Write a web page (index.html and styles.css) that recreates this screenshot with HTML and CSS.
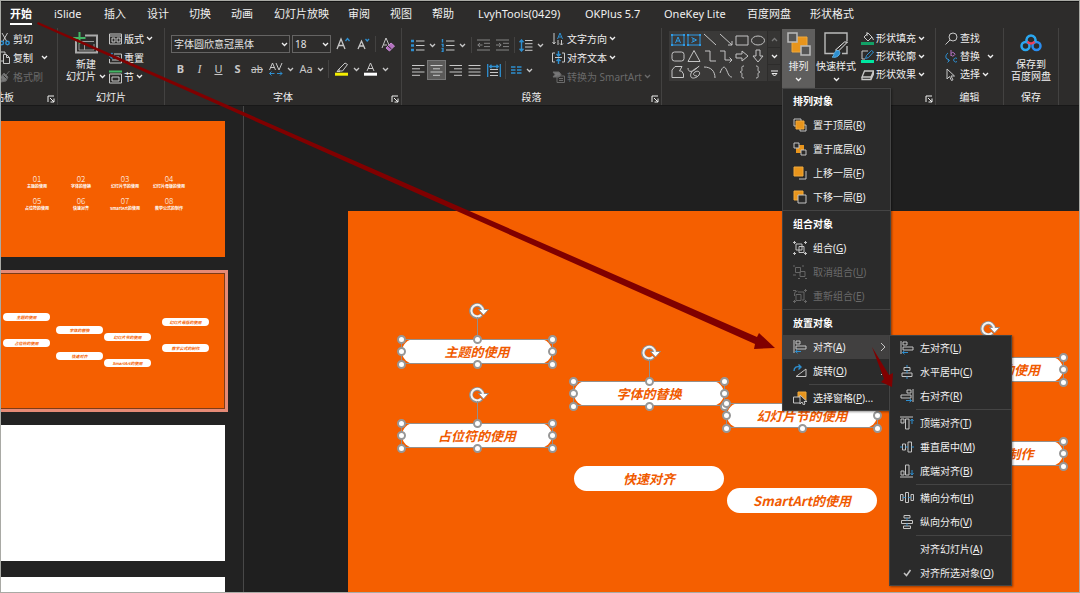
FILE: index.html
```html
<!DOCTYPE html>
<html lang="zh-CN">
<head>
<meta charset="utf-8">
<title>演示文稿</title>
<link rel="stylesheet" href="styles.css">
</head>
<body>
<svg class="defs" aria-hidden="true">
  <symbol id="caret" viewBox="0 0 7 5"><path d="M1 1l2.5 2.5L6 1"/></symbol>
  <symbol id="launch" viewBox="0 0 8 8"><path d="M1 7V1h6M3 3l4 4M7 3.5V7H3.5"/></symbol>
  <symbol id="rot" viewBox="0 0 20 18">
    <path d="M12.500 13A6 6 0 1 1 14 8" stroke="#8f8f8f" stroke-width="4"/>
    <path d="M9.500 7.500h10l-5 5.500z" fill="#fff" stroke="#8f8f8f" stroke-width="1"/>
    <path d="M12.200 12.800A5.800 5.800 0 1 1 14 8.500" stroke="#f4f4f4" stroke-width="2"/>
  </symbol>
</svg>
<div class="app">
  <header class="ribbon">
    <nav class="tabs">
      <button class="tab active">开始</button><button class="tab">iSlide</button><button class="tab">插入</button><button class="tab">设计</button><button class="tab">切换</button><button class="tab">动画</button><button class="tab">幻灯片放映</button><button class="tab">审阅</button><button class="tab">视图</button><button class="tab">帮助</button><button class="tab">LvyhTools(0429)</button><button class="tab">OKPlus 5.7</button><button class="tab">OneKey Lite</button><button class="tab">百度网盘</button><button class="tab">形状格式</button>
    </nav>
    <div class="groups">
      <section class="group clipboard">
        <div class="body stack">
          <button class="cmd"><svg width="10" height="14" viewBox="0 0 10 14"><path d="M2 1l4.500 8M7.500 1L3 9"/><g stroke="#2e8fd0" stroke-width="1.500"><circle cx="1.800" cy="11" r="1.700"/><circle cx="7.500" cy="11" r="1.700"/></g></svg>剪切</button>
          <button class="cmd"><svg width="10" height="14" viewBox="0 0 10 14"><path d="M3.500 3.500h3l3 3v6h-6zM6.500 3.500v3h3M3 10H0V1h5v2"/></svg>复制<svg class="caret push"><use href="#caret"/></svg></button>
          <button class="cmd off"><svg width="10" height="14" viewBox="0 0 10 14"><path d="M9.500 1L6 5M4 3l4 4-2 4-5 1 1-3-2-1z" fill="#777"/><path d="M3.500 5.500l3 3" stroke="#2d2c2b"/></svg>格式刷</button>
        </div>
        <div class="foot"><span>剪贴板</span><button class="launch" aria-label="剪贴板选项"><svg><use href="#launch"/></svg></button></div>
      </section>
      <section class="group slides">
        <div class="body row">
          <button class="big newslide"><svg width="26" height="24" viewBox="0 0 26 24"><path d="M12 4.500h12v17H3V10" stroke="#aaa" stroke-width="2"/><path d="M6 10.500h15M11.500 13v6M6 13v6h15v-6" stroke="#999"/><path d="M6.500 1v12M0 7h12.500" stroke="#43b765" stroke-width="2"/></svg><span>新建</span><span>幻灯片 <svg class="caret"><use href="#caret"/></svg></span></button>
          <div class="stack">
            <button class="cmd"><svg width="13" height="12" viewBox="0 0 13 12"><path d="M.5 1h12v10H.5zM.5 3h12M3 5h3v4H3zM8 5h3v4H8z"/></svg>版式<svg class="caret"><use href="#caret"/></svg></button>
            <button class="cmd"><svg width="13" height="12" viewBox="0 0 13 12"><path d="M5 2h7.500v9h-12V7M3 8h7V5H6"/><path d="M1 4h4a3 3 0 0 1 2 3M3.500 1L.8 4l2.700 2.500" stroke="#2e8fd0" stroke-width="1.500"/></svg>重置</button>
            <button class="cmd"><svg width="13" height="14" viewBox="0 0 13 14"><path d="M0 1.500h13" stroke="#43b765" stroke-width="2"/><path d="M.5 4h12v9H.5zM3 7h7v4H3z"/></svg>节<svg class="caret"><use href="#caret"/></svg></button>
          </div>
        </div>
        <div class="foot"><span>幻灯片</span></div>
      </section>
      <section class="group font">
        <div class="body rows">
          <div class="tools font-top">
            <label class="combo"><select aria-label="字体"><option>字体圆欣意冠黑体</option></select><svg class="caret"><use href="#caret"/></svg></label>
            <label class="combo"><select aria-label="字号"><option>18</option></select><svg class="caret"><use href="#caret"/></svg></label>
            <button class="ib" aria-label="增大字号"><svg width="14" height="14" viewBox="0 0 14 14"><path d="M1 12L5 2l4 10M2.500 8.500h5" stroke-width="1.300"/><path d="M9.500 4l2-2.500 2 2.500" stroke="#2e8fd0" stroke-width="1.300"/></svg></button>
            <button class="ib" aria-label="减小字号"><svg width="14" height="14" viewBox="0 0 14 14"><path d="M2 12l3.500-8L9 12M3.500 9h4" stroke-width="1.300"/><path d="M9.500 2l1.700 2L13 2" stroke="#2e8fd0" stroke-width="1.300"/></svg></button>
            <i class="sep"></i>
            <button class="ib" aria-label="清除格式"><svg width="15" height="15" viewBox="0 0 15 15"><path d="M1 11L5 1l3 7M2.500 8H6"/><path d="M5 11l5-5 3.500 3-5 5z" fill="#b470c0" stroke="#c58ad0"/><path d="M7 9l3.500 3" stroke="#2d2c2b"/></svg></button>
          </div>
          <div class="tools font-bottom">
            <button class="ib"><b>B</b></button>
            <button class="ib serif"><em>I</em></button>
            <button class="ib"><u>U</u></button>
            <button class="ib"><b>S</b></button>
            <button class="ib small"><s>ab</s></button>
            <button class="ib" aria-label="字符间距"><svg width="14" height="14" viewBox="0 0 14 14"><path d="M.5 8l3-7 3 7M1.500 5.500h4M7 1l3 7 3-7"/><path d="M.5 11.500h5M2.500 9.500l-2 2 2 2M8 11.500h5M11 9.500l2 2-2 2" stroke="#2e8fd0"/></svg><svg class="caret"><use href="#caret"/></svg></button>
            <button class="ib">Aa<svg class="caret"><use href="#caret"/></svg></button>
            <i class="sep"></i>
            <button class="ib" aria-label="突出显示"><svg width="14" height="14" viewBox="0 0 14 14"><path d="M4 7l6-6 2.500 1.500-5 6.500H4zM4 7L2 9.500h3"/><path d="M0 12.200h13" stroke="#f4ee00" stroke-width="3"/></svg><svg class="caret"><use href="#caret"/></svg></button>
            <button class="ib" aria-label="字体颜色"><svg width="14" height="14" viewBox="0 0 14 14"><path d="M3 9l3.500-8L10 9M4 6.500h5"/><path d="M0 12.200h13" stroke="#fff" stroke-width="3"/></svg><svg class="caret"><use href="#caret"/></svg></button>
          </div>
        </div>
        <div class="foot"><span>字体</span><button class="launch" aria-label="字体选项"><svg><use href="#launch"/></svg></button></div>
      </section>
      <section class="group para">
        <div class="body row">
          <div class="rows">
            <div class="tools para-top">
              <button class="ib" aria-label="项目符号"><svg width="14" height="13" viewBox="0 0 14 13"><path d="M5 2h8.500M5 6.500h8.500M5 11h8.500"/><path d="M0 2h3M0 6.500h3M0 11h3" stroke="#2e8fd0" stroke-width="2.500"/></svg><svg class="caret"><use href="#caret"/></svg></button>
              <button class="ib" aria-label="编号"><svg width="14" height="13" viewBox="0 0 14 13"><path d="M5 2h8.500M5 6.500h8.500M5 11h8.500"/><path d="M1.500 0v3.500M.5 5.500h1.500v2.500M.5 9.500h1.500v3H.5" stroke="#2e8fd0" stroke-width="1.400"/></svg><svg class="caret"><use href="#caret"/></svg></button>
              <i class="sep"></i>
              <button class="ib dim" aria-label="减少缩进"><svg width="13" height="12" viewBox="0 0 13 12"><path d="M0 1h13M7 4.300h6M7 7.600h6M0 11h13M5.500 6H.8M3 4L.8 6 3 8"/></svg></button>
              <button class="ib dim" aria-label="增加缩进"><svg width="13" height="12" viewBox="0 0 13 12"><path d="M0 1h13M7 4.300h6M7 7.600h6M0 11h13M0 6h5M3 4l2.200 2L3 8"/></svg></button>
              <i class="sep"></i>
              <button class="ib" aria-label="行距"><svg width="14" height="13" viewBox="0 0 14 13"><path d="M6 1.500h7.500M6 4.700h7.500M6 8h7.500M6 11.300h7.500"/><path d="M2.500 1v11M.5 3.200l2-2.200 2 2.200M.5 9.800l2 2.200 2-2.200" stroke="#2e8fd0" stroke-width="1.400"/></svg><svg class="caret"><use href="#caret"/></svg></button>
            </div>
            <div class="tools para-bottom">
              <button class="ib" aria-label="左对齐"><svg width="13" height="13" viewBox="0 0 13 13"><path d="M0 1.500h12.500M0 4.800h8M0 8h12.500M0 11.300h8"/></svg></button>
              <button class="ib on" aria-label="居中"><svg width="13" height="13" viewBox="0 0 13 13"><path d="M.5 1.500h12M3 4.800h7M.5 8h12M3 11.300h7"/></svg></button>
              <button class="ib" aria-label="右对齐"><svg width="13" height="13" viewBox="0 0 13 13"><path d="M.5 1.500H13M5 4.800h8M.5 8H13M5 11.300h8"/></svg></button>
              <button class="ib" aria-label="两端对齐"><svg width="13" height="13" viewBox="0 0 13 13"><path d="M.5 1.500h12M.5 4.800h12M.5 8h12M.5 11.300h12"/></svg></button>
              <button class="ib" aria-label="分散对齐"><svg width="14" height="13" viewBox="0 0 14 13"><path d="M3 5.500h8M3 8.500h8M3 11.500h8"/><path d="M.7 0v13M13.300 0v13M2.500 2.500h9M4.500.8L2.700 2.500l1.800 1.700M9.500.8l1.800 1.700-1.800 1.700" stroke="#2e8fd0" stroke-width="1.300"/></svg></button>
              <i class="sep"></i>
              <button class="ib" aria-label="分栏"><svg width="11" height="8" viewBox="0 0 11 8"><path d="M0 1h4.500M0 4h4.500M0 7h4.500M6 1h4.500M6 4h4.500M6 7h4.500" stroke="#2e8fd0" stroke-width="1.400"/></svg><svg class="caret"><use href="#caret"/></svg></button>
            </div>
          </div>
          <div class="stack">
            <button class="cmd"><svg width="13" height="14" viewBox="0 0 13 14"><path d="M2 1v11M.5 10L2 12l1.500-2M6 8v5M9.500 8v5M8 11.500L9.500 13l1.500-1.500"/><path d="M5.500 7L8 1l2.500 6M6.500 5h3" stroke="#2e8fd0"/></svg>文字方向<svg class="caret"><use href="#caret"/></svg></button>
            <button class="cmd"><svg width="13" height="14" viewBox="0 0 13 14"><path d="M3 2H.5v9H3M10 2h2.500v9H10M3 6.500h7"/><path d="M6.500 0v5M4.500 3l2 2 2-2M6.500 13V8M4.500 10l2-2 2 2" stroke="#2e8fd0" stroke-width="1.400"/></svg>对齐文本<svg class="caret"><use href="#caret"/></svg></button>
            <button class="cmd off"><svg width="13" height="14" viewBox="0 0 13 14"><path d="M1 2h6l2 2.500L7 7H1l2-2.500z" fill="#777"/><path d="M5 6h7.500v6.500H5zM7 8.500h4M7 10.500h4"/></svg>转换为 SmartArt<svg class="caret"><use href="#caret"/></svg></button>
          </div>
        </div>
        <div class="foot"><span>段落</span><button class="launch" aria-label="段落选项"><svg><use href="#launch"/></svg></button></div>
      </section>
      <section class="group draw">
        <div class="body row">
          <div class="gallery">
            <button aria-label="文本框"><svg><path d="M2 3h12v10H2zM5.500 11L8 5l2.500 6M6.500 9h3" stroke="#2e9be6"/><path d="M1 2h2v2H1zM13 2h2v2h-2zM1 12h2v2H1zM13 12h2v2h-2z" fill="#2e9be6" stroke="none"/></svg></button>
            <button aria-label="竖排文本框"><svg><path d="M2 3h12v10H2zM5.500 5.500l5 2.500-5 2.500M7 6.500v3" stroke="#2e9be6"/><path d="M1 2h2v2H1zM13 2h2v2h-2zM1 12h2v2H1zM13 12h2v2h-2z" fill="#2e9be6" stroke="none"/></svg></button>
            <button aria-label="直线"><svg><path d="M2 2l12 11"/></svg></button>
            <button aria-label="箭头"><svg><path d="M2 2l12 11M14 9v4h-4"/></svg></button>
            <button aria-label="矩形"><svg><path d="M2 4h12v9H2z"/></svg></button>
            <button aria-label="椭圆"><svg><ellipse cx="8" cy="8.500" rx="6.500" ry="4.500"/></svg></button>
            <button aria-label="圆角矩形"><svg><rect x="2" y="4" width="12" height="9" rx="2.500"/></svg></button>
            <button aria-label="三角形"><svg><path d="M8 2.500L14 13.500H2z"/></svg></button>
            <button aria-label="肘形连接符"><svg><path d="M3 3h5v10h6"/></svg></button>
            <button aria-label="肘形箭头"><svg><path d="M2 3h5v9h7M11.500 9.500L14 12l-2.500 2.500"/></svg></button>
            <button aria-label="右箭头"><svg><path d="M2 6h6V3l6 5-6 5v-3H2z"/></svg></button>
            <button aria-label="下箭头"><svg><path d="M6 2h4v6h3l-5 6-5-6h3z"/></svg></button>
            <button aria-label="任意多边形"><svg><path d="M2 13.500V6l3-3.500h7L9.500 7h2l2 3v3.500z"/></svg></button>
            <button aria-label="自由曲线"><svg><path d="M2 4c0 5 5 4 9 0s2-1-2 1-5 6-4 8 6 1 8-2-1-5-4-3-1 4 2 4"/></svg></button>
            <button aria-label="弧形"><svg><path d="M2 3c7 0 11 4 11 11"/></svg></button>
            <button aria-label="曲线"><svg><path d="M2 9c3-8 5-7 7-2s3 6 5 6"/></svg></button>
            <button aria-label="左大括号"><svg><path d="M10 2c-3 0-2 2-2 4 0 1-1 2-2 2 1 0 2 1 2 2 0 2-1 4 2 4"/></svg></button>
            <button aria-label="右大括号"><svg><path d="M6 2c3 0 2 2 2 4 0 1 1 2 2 2-1 0-2 1-2 2 0 2 1 4-2 4"/></svg></button>
          </div>
          <div class="scroller">
            <button class="dim" aria-label="上一行"><svg class="caret flip"><use href="#caret"/></svg></button>
            <button aria-label="下一行"><svg class="caret"><use href="#caret"/></svg></button>
            <button aria-label="更多"><svg width="7" height="7" viewBox="0 0 7 7"><path d="M0 1h7M1 3.500L3.500 6 6 3.500z"/></svg></button>
          </div>
          <div class="arrange">
            <button class="big pressed"><svg width="24" height="24" viewBox="0 0 24 24"><path d="M5 5h15v15H5z" fill="#e8951c" stroke="#f0a93c"/><path d="M1 1h9v9H1zM14 14h9v9h-9z" fill="#555" stroke="#bbb" stroke-width="1.500"/></svg><span>排列</span><svg class="caret"><use href="#caret"/></svg></button>
            <div class="menu">
              <h3>排列对象</h3>
              <button class="item"><svg><path d="M1 1h7v7H1zM7 7h6v6H7z"/><path d="M3 3h8v8H3z" fill="#e8951c" stroke="#f0a93c"/></svg><span>置于顶层(<u>R</u>)</span></button>
              <button class="item"><svg><path d="M3 3h8v8H3z" fill="#e8951c" stroke="none"/><path d="M1 1h5v5H1zM8 8h5v5H8z" fill="#2b2b2b"/></svg><span>置于底层(<u>K</u>)</span></button>
              <button class="item"><svg><path d="M6 13h7V5"/><path d="M1 1h9v9H1z" fill="#e8951c" stroke="#f0a93c"/></svg><span>上移一层(<u>F</u>)</span></button>
              <button class="item"><svg><path d="M1 1h9v9H1z" fill="#e8951c" stroke="#f0a93c"/><path d="M5 5h8v8H5z" fill="#2b2b2b"/></svg><span>下移一层(<u>B</u>)</span></button>
              <hr>
              <h3>组合对象</h3>
              <button class="item"><svg><path d="M3 3h6v6H3zM6 5.500h5v6H6zM0 1.500h3M1.500 0v3M11 1.500h3M12.500 0v3M0 12.500h3M1.500 11v3M11 12.500h3M12.500 11v3"/></svg><span>组合(<u>G</u>)</span></button>
              <button class="item off"><svg><path d="M2.500 2.500h5v5h-5zM7 6.500h5v5H7zM0 1h2M9 1h2M0 10h3M5 13.500h2M12 13.500h2"/></svg><span>取消组合(<u>U</u>)</span></button>
              <button class="item off"><svg><path d="M3 5.500h5v6H3zM5 3h6v8H9M0 1.500h3M11 1.500h3M12.500 0v3M0 12.500h3M1.500 11v3M11 12.500h3M12.500 11v3M1.500 7V5a3 3 0 0 1 3-3"/></svg><span>重新组合(<u>E</u>)</span></button>
              <hr>
              <h3>放置对象</h3>
              <div class="sub">
                <button class="item hover"><svg><path d="M1 0v13M3 1h4v3H3zM3 6h10v3H3z"/><path d="M2.500 11.500H8M4.500 9.800l-2 1.700 2 1.700" stroke="#2e8fd0"/></svg><span>对齐(<u>A</u>)</span><svg class="more"><path d="M1 1l4 4-4 4"/></svg></button>
                <div class="menu submenu">
                  <button class="item"><svg><path d="M1 0v13M3 1h4v3H3zM3 6h10v3H3z"/><path d="M2.500 11.500H8M4.500 9.800l-2 1.700 2 1.700" stroke="#2e8fd0"/></svg><span>左对齐(<u>L</u>)</span></button>
                  <button class="item"><svg><path d="M4 2.500h6v3H4zM2 8h10v3.500H2z"/><path d="M7 0v2.500M7 5.500V8M7 11.500V14" stroke="#2e8fd0"/></svg><span>水平居中(<u>C</u>)</span></button>
                  <button class="item"><svg><path d="M13 0v13M7 1h4v3H7zM1 6h10v3H1z"/><path d="M6 11.500h5.500M9.500 9.800l2 1.700-2 1.700" stroke="#2e8fd0"/></svg><span>右对齐(<u>R</u>)</span></button>
                  <hr class="inset">
                  <button class="item"><svg><path d="M0 1h13M1 3h3v4H1zM5.500 3H9v10H5.500z"/><path d="M12 8V3M10.500 5L12 3l1.500 2" stroke="#2e8fd0"/></svg><span>顶端对齐(<u>T</u>)</span></button>
                  <button class="item"><svg><path d="M2.500 4h3v6h-3zM8 2h3.500v10H8z"/><path d="M0 7h2.500M5.500 7H8M11.500 7H14" stroke="#2e8fd0"/></svg><span>垂直居中(<u>M</u>)</span></button>
                  <button class="item"><svg><path d="M0 13h13M1 7h3v4H1zM5.500 1H9v10H5.500z"/><path d="M12 6v5M10.500 9l1.500 2 1.500-2" stroke="#2e8fd0"/></svg><span>底端对齐(<u>B</u>)</span></button>
                  <hr class="inset">
                  <button class="item"><svg><path d="M.5 3.500H3v6H.500zM5.500 1.500h3v10h-3zM11 3.500h2.500v6H11z"/><path d="M3 6.500h2.500M8.500 6.500H11" stroke="#2e8fd0"/></svg><span>横向分布(<u>H</u>)</span></button>
                  <button class="item"><svg><path d="M4 .5h6V3H4zM1.500 5.500h11v3h-11zM3.500 11h7v2.500h-7z"/><path d="M7 3v2.500M7 8.500V11" stroke="#2e8fd0"/></svg><span>纵向分布(<u>V</u>)</span></button>
                  <hr class="inset">
                  <button class="item"><svg></svg><span>对齐幻灯片(<u>A</u>)</span></button>
                  <button class="item"><svg><path d="M4 7l2.500 2.500L10.500 4" stroke-width="1.500"/></svg><span>对齐所选对象(<u>O</u>)</span></button>
                </div>
              </div>
              <button class="item"><svg><path d="M3 12.500h10V5z"/><path d="M1 7c0-4 3-5 6-4M5.500.5L8 3 5.500 5.500" stroke="#2e8fd0" stroke-width="1.400"/></svg><span>旋转(<u>O</u>)</span><svg class="more"><path d="M1 1l4 4-4 4"/></svg></button>
              <hr class="inset">
              <button class="item"><svg><path d="M5 1h8v8H5z" fill="#e8951c" stroke="#f0a93c"/><path d="M.5 6h7v6h-7z" fill="#2b2b2b"/><path d="M7 4v9l2-2 1.500 3 1.500-1-1-2.500h3z" fill="#2b2b2b"/></svg><span>选择窗格(<u>P</u>)...</span></button>
            </div>
          </div>
          <button class="big styles"><svg width="24" height="26" viewBox="0 0 24 26"><path d="M10 21.500H1V1h22v8M23 14v7.500h-5" stroke="#bbb" stroke-width="1.400"/><path d="M23.500 10l-9 9-3-1 9-8z" fill="#2d2c2b"/><path d="M8 25c2 0 2-6 5-6.500s4 3 1 5.500c-2 1.500-4 1.500-6 1z" fill="#2e8fd0" stroke="#5cb0e6"/></svg><span>快速样式</span><svg class="caret"><use href="#caret"/></svg></button>
          <div class="stack tight">
            <button class="cmd"><svg width="13" height="13" viewBox="0 0 13 13"><path d="M3 5l4-4 4 4-4 4zM6 0v4M11 5l1.500 3"/><path d="M0 11.500h13" stroke="#12a066" stroke-width="3"/></svg>形状填充<svg class="caret"><use href="#caret"/></svg></button>
            <button class="cmd"><svg width="13" height="13" viewBox="0 0 13 13"><path d="M7 1H1v8h3"/><path d="M4.500 8.500l1-3L10.500.500l2 1.500-5 5.500z" stroke="#2e8fd0"/><path d="M0 11.500h13" stroke="#00e6a0" stroke-width="3"/></svg>形状轮廓<svg class="caret"><use href="#caret"/></svg></button>
            <button class="cmd"><svg width="13" height="13" viewBox="0 0 13 13"><path d="M3.500 3h9l-2.500 6H1zM1 9v2.500h9l2.500-5.500V3M10 9v2.500" stroke-width="1.300"/></svg>形状效果<svg class="caret"><use href="#caret"/></svg></button>
          </div>
        </div>
        <div class="foot"><span></span><button class="launch" aria-label="形状选项"><svg><use href="#launch"/></svg></button></div>
      </section>
      <section class="group edit">
        <div class="body stack tight">
          <button class="cmd"><svg width="13" height="13" viewBox="0 0 13 13"><circle cx="8" cy="5" r="4"/><path d="M5 8L.5 12.500"/></svg>查找</button>
          <button class="cmd"><svg width="13" height="13" viewBox="0 0 13 13"><path d="M6 0v6M6 3.500a2 1.700 0 1 1 0 1.500" stroke="#b470c0"/><path d="M3 3C0 5 0 9 4 10.500M2.500 8.500l2 2-2 2M12 8.500a2 2 0 1 0 0 3" stroke="#2e8fd0"/></svg>替换<svg class="caret push"><use href="#caret"/></svg></button>
          <button class="cmd"><svg width="13" height="13" viewBox="0 0 13 13"><path d="M2 1v10l2.500-2.500L6.500 12.500l1.500-.7-2-3.800h3.500z"/></svg>选择<svg class="caret"><use href="#caret"/></svg></button>
        </div>
        <div class="foot"><span>编辑</span></div>
      </section>
      <section class="group save">
        <div class="body">
          <button class="big netdisk"><svg width="22" height="20" viewBox="0 0 22 20"><g stroke-width="2.500"><circle cx="5.500" cy="13" r="4" stroke="#2aa7f0"/><circle cx="16.500" cy="13" r="4" stroke="#2a8df0"/><path d="M7 9a4.500 4.500 0 1 1 8 0" stroke="#2aa7f0"/><path d="M7.500 8.500a4 4 0 0 0 7 0" stroke="#f0405a"/></g></svg><span>保存到</span><span>百度网盘</span></button>
        </div>
        <div class="foot"><span>保存</span></div>
      </section>
    </div>
  </header>
  <main class="work">
    <aside class="thumbs">
      <div class="thumb toc">
        <div><b>01</b><span>主题的使用</span></div><div><b>02</b><span>字体的替换</span></div><div><b>03</b><span>幻灯片节的使用</span></div><div><b>04</b><span>幻灯片母版的使用</span></div>
        <div><b>05</b><span>占位符的使用</span></div><div><b>06</b><span>快速对齐</span></div><div><b>07</b><span>SmartArt的使用</span></div><div><b>08</b><span>教学公式的制作</span></div>
      </div>
      <div class="thumb current">
        <span class="mini m1">主题的使用</span><span class="mini m2">占位符的使用</span><span class="mini m3">字体的替换</span><span class="mini m4">快速对齐</span><span class="mini m5">幻灯片节的使用</span><span class="mini m6">SmartArt的使用</span><span class="mini m7">幻灯片母版的使用</span><span class="mini m8">教学公式的制作</span>
      </div>
      <div class="thumb blank"></div>
      <div class="thumb blank"></div>
    </aside>
    <div class="stage">
      <div class="slide">
        <div class="pill p1 sel"><span>主题的使用</span><svg class="rot"><use href="#rot"/></svg><i class="h nw"></i><i class="h n"></i><i class="h ne"></i><i class="h w"></i><i class="h e"></i><i class="h sw"></i><i class="h s"></i><i class="h se"></i></div>
        <div class="pill p2 sel"><span>占位符的使用</span><svg class="rot"><use href="#rot"/></svg><i class="h nw"></i><i class="h n"></i><i class="h ne"></i><i class="h w"></i><i class="h e"></i><i class="h sw"></i><i class="h s"></i><i class="h se"></i></div>
        <div class="pill p3 sel"><span>字体的替换</span><svg class="rot"><use href="#rot"/></svg><i class="h nw"></i><i class="h n"></i><i class="h ne"></i><i class="h w"></i><i class="h e"></i><i class="h sw"></i><i class="h s"></i><i class="h se"></i></div>
        <div class="pill p4"><span>快速对齐</span></div>
        <div class="pill p5 sel"><span>幻灯片节的使用</span><svg class="rot"><use href="#rot"/></svg><i class="h nw"></i><i class="h n"></i><i class="h ne"></i><i class="h w"></i><i class="h e"></i><i class="h sw"></i><i class="h s"></i><i class="h se"></i></div>
        <div class="pill p6"><span>SmartArt的使用</span></div>
        <div class="pill p7 sel"><span>幻灯片母版的使用</span><svg class="rot"><use href="#rot"/></svg><i class="h nw"></i><i class="h n"></i><i class="h ne"></i><i class="h w"></i><i class="h e"></i><i class="h sw"></i><i class="h s"></i><i class="h se"></i></div>
        <div class="pill p8 sel"><span>教学公式的制作</span><svg class="rot"><use href="#rot"/></svg><i class="h nw"></i><i class="h n"></i><i class="h ne"></i><i class="h w"></i><i class="h e"></i><i class="h sw"></i><i class="h s"></i><i class="h se"></i></div>
      </div>
    </div>
  </main>
  <svg class="arrows" aria-hidden="true">
    <path d="M38 22L757 337l2-4 16 15-21 1 1-5L37 24z"/>
    <path d="M872 347l17 28 4-2-1 14-11-5 3-3z"/>
  </svg>
</div>
</body>
</html>
```
FILE: styles.css
```css
* { box-sizing: border-box; }
body { margin: 0; background: #222; color: #f0f0f0; font: 10px/12px "Noto Sans", "Noto Sans CJK SC", sans-serif; }
button, select { margin: 0; padding: 0; border: 0; background: none; color: inherit; font: inherit; white-space: nowrap; }
svg { display: block; flex: none; fill: none; stroke: currentColor; }
h3, hr { margin: 0; }
.defs { position: absolute; width: 0; height: 0; }

.app { position: relative; display: flex; flex-direction: column; height: 100vh; overflow: hidden; }
.app::after { content: ""; position: absolute; inset: 0; border: 1px solid #a9aaa5; pointer-events: none; z-index: 9; }

/* Ribbon */
.ribbon { background: #2d2c2b; border-top: 2px solid #141414; border-bottom: 1px solid #181818; }
.tabs { display: grid; grid-template-columns: 44px 50px 43px 42px 42px 43px 74px 42px 42px 46px 107px 79px 83px 63px auto; justify-content: start; padding-left: 10px; font-size: 11px; line-height: 16px; }
.tab { justify-self: start; height: 26px; padding-top: 4px; border-bottom: 2px solid transparent; display: flex; align-items: flex-start; }
.tab.active { font-weight: bold; color: #fff; height: 23px; border-bottom-color: #fff; }

.groups { display: flex; }
.group { display: flex; flex-direction: column; flex: none; position: relative; border-right: 1px solid #434241; }
.clipboard { width: 58px; }
.slides { width: 107px; }
.font { width: 237px; }
.para { width: 260px; }
.draw { width: 274px; }
.edit { width: 68px; }
.save { width: 55px; }
.body { height: 61px; padding-top: 1px; }
.row { display: flex; align-items: flex-start; }
.stack { display: grid; grid-auto-rows: 19px; align-content: start; }
.tight { grid-auto-rows: 18px; }
.rows { display: grid; align-content: start; gap: 6px; padding-top: 7px; }
.foot { display: grid; align-items: center; justify-items: center; height: 16px; }
.foot > * { grid-area: 1 / 1; }
.launch { justify-self: end; padding-right: 2px; padding-top: 3px; }
.launch svg { width: 8px; height: 8px; }
.cmd { display: flex; align-items: center; gap: 2px; text-align: left; }
.caret { width: 7px; height: 5px; stroke-width: 1.3; }
.cmd .caret.push { margin-left: 5px; }
.cmd > svg:first-child, .ib svg { stroke: #c8c8c8; }
.off, .cmd.off > svg { color: #6a6a6a; stroke: #6a6a6a; }
.flip { transform: scaleY(-1); }
.big { display: flex; flex-direction: column; align-items: center; }
.big span { display: flex; align-items: center; gap: 3px; }

.clipboard { overflow: hidden; }
.clipboard .cmd { gap: 3px; }
.clipboard .foot span { justify-self: start; margin-left: -16px; }
.slides .body { padding-left: 8px; gap: 3px; }
.newslide { padding-top: 2px; }
.newslide span:nth-of-type(1) { margin-top: 3px; }

.tools { display: grid; align-items: stretch; }
.sep { width: 1px; background: #434241; margin: 1px 0; }
.ib { display: flex; align-items: center; justify-content: center; gap: 4px; font-size: 11px; color: #c8c8c8; }
.ib.dim svg, .scroller .dim { stroke: #858585; color: #777; }
.ib.on { background: #5b5a59; border: 1px solid #777; }
.ib.serif { font-family: "Liberation Serif", serif; font-size: 12px; }
.ib.small { font-size: 10px; }
.font .rows { padding: 8px 0 0 6px; }
.font-top { grid-template-columns: 119px 39px 20px 16px 4px 18px; column-gap: 2px; grid-template-rows: 18px; }
.font-top .sep { justify-self: center; }
.font-bottom { grid-template-columns: 19px 19px 19px 19px 20px 28px 33px 6px 27px 31px; grid-template-rows: 20px; }
.combo { position: relative; display: grid; }
.combo select { appearance: none; border: 1px solid #656463; border-radius: 0; padding-left: 2px; width: 100%; color: #e4e4e4; }
.combo .caret { position: absolute; right: 2px; top: 7px; }

.font .rows, .para .rows { padding-top: 7px; }
.para .rows { padding-left: 7px; width: 150px; }
.para-top { grid-template-columns: 29px 31px 5px 19px 19px 5px 29px; grid-template-rows: 18px; }
.para-top .sep, .para-bottom .sep { justify-self: center; }
.para-bottom { grid-template-columns: 18px 19px 19px 19px 19px 5px 28px; grid-template-rows: 20px; }

.draw .body { padding-left: 7px; }
.gallery { display: grid; grid-template: repeat(3, 16px) / repeat(6, 16px); padding: 1px; margin-top: 2px; background: #3a3938; color: #c4c4c4; }
.gallery svg { width: 16px; height: 16px; }
.scroller { display: grid; grid-template-rows: repeat(3, 16px); gap: 1px; width: 12px; margin: 2px 2px 0 1px; }
.scroller button { display: grid; place-items: center; background: #363534; }
.arrange { position: relative; width: 33px; }
.pressed { width: 100%; height: 60px; background: #5f5e5d; padding-top: 3px; }
.pressed span { margin: 4px 0 5px; }
.styles { padding: 3px 0 0; width: 42px; }
.styles span { margin: 2px 0 5px; }
.draw .stack { padding-left: 4px; }
.edit .body { padding-left: 9px; }
.netdisk { width: 100%; padding-top: 4px; }
.netdisk span:nth-of-type(1) { margin-top: 5px; }

/* Menus */
.menu { position: absolute; left: 0; top: 59px; width: 109px; z-index: 5; background: #2b2b2b; border: 1px solid #444; box-shadow: 1px 1px 2px #0006; }
.menu h3 { height: 24px; padding: 0 10px; font-size: 10px; line-height: 24px; color: #fff; }
.menu hr { border: 0; border-top: 1px solid #444; margin: 1px 0; }
.menu hr.inset { margin-left: 26px; }
.item { display: flex; align-items: center; gap: 6px; width: 100%; height: 24px; padding: 0 4px 0 10px; text-align: left; }
.item > svg { width: 14px; height: 14px; stroke: #c4c4c4; }
.item.off > svg { stroke: #666; }
.item .more { width: 6px; height: 10px; margin-left: auto; }
.item.hover { background: #414040; }
.sub { position: relative; }
.submenu { left: 106px; top: 0; width: 123px; }

/* Workspace */
.work { display: flex; flex: 1; min-height: 0; overflow: hidden; }
.thumbs { flex: none; width: 244px; padding: 12px 15px 0 0; border-right: 1px solid #484848; display: grid; grid-auto-rows: 142px; gap: 10px; align-content: start; overflow: hidden; }
.thumb { position: relative; border: 3px solid transparent; border-left: 0; background: #f55f00 padding-box; }
.blank { background-color: #fff; }
.current { border-color: #e58a76; box-shadow: inset 0 0 0 1px #7d3c18; }
.toc { display: grid; grid-template: 22px 22px / repeat(4, 44px); align-content: start; padding: 54px 0 0 15px; color: #fff; font: 4px/6px "Noto Sans CJK SC", sans-serif; }
.toc div { display: grid; justify-items: center; align-content: start; white-space: nowrap; }
.toc b { font-size: 8px; line-height: 8px; font-weight: 300; }
.toc span { font-weight: bold; }
.mini { position: absolute; width: 47px; height: 8px; border-radius: 4px; background: #fff; color: #f55f00; font: italic bold 4px/8px "Noto Sans CJK SC", sans-serif; text-align: center; white-space: nowrap; }
.m1, .m2 { left: 3px; }
.m3, .m4 { left: 56px; }
.m5, .m6 { left: 104px; }
.m7, .m8 { left: 162px; }
.m1 { top: 40px; } .m2 { top: 66px; }
.m3 { top: 53px; } .m4 { top: 79px; }
.m5 { top: 60px; } .m6 { top: 86px; }
.m7 { top: 45px; } .m8 { top: 71px; }
.stage { flex: 1; display: grid; padding: 105px 0 0 104px; background: #1f1f1f; overflow: hidden; }
.slide { position: relative; background: #f55f00; }
.pill { position: absolute; width: 150px; height: 25px; border-radius: 13px; background: #fff; color: #f05a00; font: italic bold 13px/25px "Noto Sans CJK SC", sans-serif; text-align: center; white-space: nowrap; }
.p1 { left: 54px; top: 128px; }
.p2 { left: 54px; top: 212px; }
.p3 { left: 226px; top: 170px; }
.p4 { left: 226px; top: 255px; }
.p5 { left: 379px; top: 192px; }
.p6 { left: 379px; top: 277px; }
.p7 { left: 565px; top: 146px; }
.p8 { left: 565px; top: 230px; }
.sel::before { content: ""; position: absolute; inset: 0 -1px; border: 1px solid #94908c; }
.sel::after { content: ""; position: absolute; left: 50%; top: -22px; width: 1px; height: 22px; background: #94908c; }
.rot { position: absolute; left: 67px; top: -37px; width: 20px; height: 18px; }
.h { position: absolute; z-index: 1; width: 9px; height: 9px; margin: -4px; border: 2px solid #979797; border-radius: 50%; background: #fff; }
.nw, .w, .sw { left: -1px; }
.n, .s { left: 50%; }
.ne, .e, .se { left: 150px; }
.nw, .n, .ne { top: 0; }
.w, .e { top: 12px; }
.sw, .s, .se { top: 25px; }

.arrows { position: absolute; left: 0; top: 0; width: 100%; height: 100%; fill: #800000; stroke: none; pointer-events: none; z-index: 8; }
```
